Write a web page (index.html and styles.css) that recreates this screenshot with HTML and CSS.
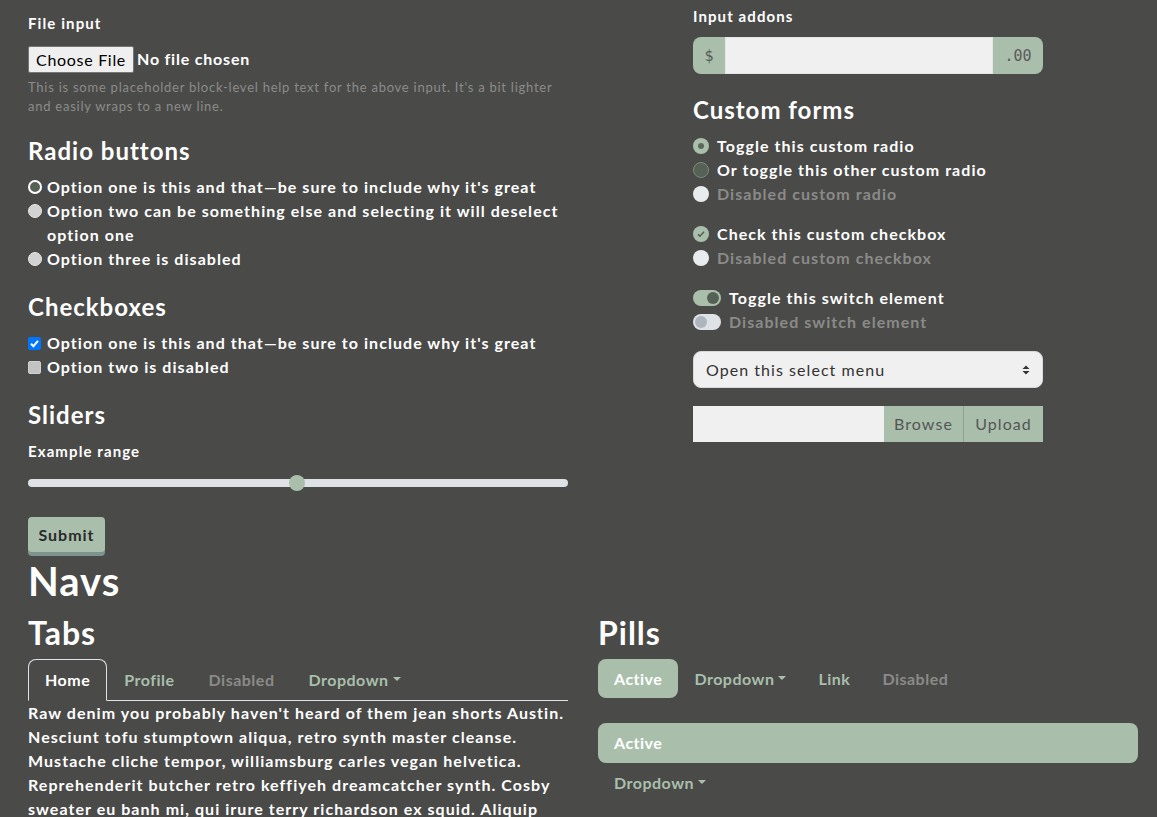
FILE: index.html
```html
<!DOCTYPE html>
<html>
<head>
<meta charset="utf-8">
<link rel="stylesheet" href="styles.css">
</head>
<body>
<div class="container">
  <div class="forms-row">
    <div class="col-left">
      <div class="group file-group">
        <div class="label">File input</div>
        <div class="file-row"><span class="file-btn">Choose File</span><span class="file-text">No file chosen</span></div>
        <div class="help">This is some placeholder block-level help text for the above input. It's a bit lighter and easily wraps to a new line.</div>
      </div>
      <h3 class="legend left">Radio buttons</h3>
      <div class="opt"><span class="radio radio-on"></span><span>Option one is this and that—be sure to include why it's great</span></div>
      <div class="opt"><span class="radio radio-off"></span><span>Option two can be something else and selecting it will deselect option one</span></div>
      <div class="opt"><span class="radio radio-off"></span><span>Option three is disabled</span></div>
      <h3 class="legend">Checkboxes</h3>
      <div class="opt"><span class="check check-on"><svg viewBox="0 0 13 13" width="13" height="13"><path d="M3 6.8 L5.4 9.2 L10 3.8" fill="none" stroke="#fff" stroke-width="2"/></svg></span><span>Option one is this and that—be sure to include why it's great</span></div>
      <div class="opt"><span class="check check-off"></span><span>Option two is disabled</span></div>
      <h3 class="legend">Sliders</h3>
      <div class="label">Example range</div>
      <div class="range"><div class="track"></div><div class="thumb"></div></div>
      <button class="submit">Submit</button>
    </div>
    <div class="col-right">
      <div class="label">Input addons</div>
      <div class="input-group"><span class="addon addon-l">$</span><span class="ig-input"></span><span class="addon addon-r">.00</span></div>
      <h3 class="legend">Custom forms</h3>
      <div class="copt"><span class="cradio cradio-on"></span><span>Toggle this custom radio</span></div>
      <div class="copt"><span class="cradio cradio-off"></span><span>Or toggle this other custom radio</span></div>
      <div class="copt disabled"><span class="cradio cradio-dis"></span><span>Disabled custom radio</span></div>
      <div class="cgap"></div>
      <div class="copt"><span class="cradio cradio-on ccheck"><svg viewBox="0 0 16 16" width="16" height="16"><path d="M5 8.3 L7 10.2 L11 5.8" fill="none" stroke="#566155" stroke-width="1.6"/></svg></span><span>Check this custom checkbox</span></div>
      <div class="copt disabled"><span class="cradio cradio-dis"></span><span>Disabled custom checkbox</span></div>
      <div class="cgap"></div>
      <div class="copt"><span class="switch switch-on"><span class="knob"></span></span><span>Toggle this switch element</span></div>
      <div class="copt disabled"><span class="switch switch-dis"><span class="knob"></span></span><span>Disabled switch element</span></div>
      <div class="select"><span>Open this select menu</span><svg class="sel-arrow" viewBox="0 0 8 12" width="8" height="12"><path d="M4 1.5 L7.5 5 H0.5 Z M4 10.5 L0.5 7 H7.5 Z" fill="#333"/></svg></div>
      <div class="cfile"><span class="cfile-input"></span><span class="cfile-btn">Browse</span><span class="cfile-btn">Upload</span></div>
    </div>
  </div>
  <h1 class="navs">Navs</h1>
  <div class="nav-row">
    <div class="nav-col">
      <h2 class="h2">Tabs</h2>
      <div class="tabs">
        <span class="tab active">Home</span>
        <span class="tab">Profile</span>
        <span class="tab dis">Disabled</span>
        <span class="tab">Dropdown<span class="caret"></span></span>
      </div>
      <p class="para">Raw denim you probably haven't heard of them jean shorts Austin. Nesciunt tofu stumptown aliqua, retro synth master cleanse. Mustache cliche tempor, williamsburg carles vegan helvetica. Reprehenderit butcher retro keffiyeh dreamcatcher synth. Cosby sweater eu banh mi, qui irure terry richardson ex squid. Aliquip placeat salvia cillum iphone.</p>
    </div>
    <div class="nav-col">
      <h2 class="h2">Pills</h2>
      <div class="pills">
        <span class="pill active">Active</span>
        <span class="pill">Dropdown<span class="caret"></span></span>
        <span class="pill">Link</span>
        <span class="pill dis">Disabled</span>
      </div>
      <div class="vpills">
        <span class="vpill active">Active</span>
        <span class="vpill">Dropdown<span class="caret"></span></span>
      </div>
    </div>
  </div>
</div>
</body>
</html>
```
FILE: styles.css
```css
* { box-sizing: border-box; }
html, body { margin: 0; padding: 0; }
body {
  background: #4a4a48;
  color: #fff;
  font-family: Lato, "Liberation Sans", sans-serif;
  font-weight: 700;
  font-size: 16px;
  letter-spacing: 1.05px;
  line-height: 24px;
  overflow: hidden;
  height: 817px;
}
.container { padding: 0 19px 0 28px; }
.forms-row { display: flex; gap: 125px; }
.col-left { width: 540px; padding-top: 11px; }
.col-right { width: 350px; padding-top: 4px; }
.label { font-size: 15px; line-height: 24px; letter-spacing: 1.1px; }
.file-row { display: flex; align-items: center; margin-top: 11px; height: 26px; }
.file-btn {
  background: #efefef; color: #000; border: 1px solid #767676; border-radius: 2px;
  height: 27px; line-height: 25px; padding: 0 7px; font-weight: 400; font-size: 16px; letter-spacing: 0.7px;
}
.file-text { margin-left: 3px; letter-spacing: 0.8px; }
.help { color: #8c8c8a; font-size: 13px; line-height: 19px; font-weight: 400; letter-spacing: 0.75px; margin-top: 6px; }
.legend { font-size: 24px; line-height: 28px; font-weight: 700; letter-spacing: 1px; margin: 22px 0 10px; }
.legend.left { margin-top: 21px; }
.opt { display: flex; align-items: flex-start; }
.opt > span:last-child { flex: 1; }
.radio { width: 14px; height: 14px; border-radius: 50%; margin: 5px 5px 0 0; flex: none; }
.radio-on { border: 2px solid #fff; background: #566155; }
.radio-off { background: #d2d2d0; border: 1px solid #e8e8e8; }
.check { width: 13px; height: 13px; border-radius: 2px; margin: 6px 6px 0 0; flex: none; display: block; }
.check svg { display: block; }
.check-on { background: #0075ff; }
.check-off { background: #c3c3c3; border: 1px solid #d0d0d0; }
.range { position: relative; height: 16px; margin-top: 12px; }
.track { position: absolute; left: 0; right: 0; top: 4px; height: 8px; border-radius: 4px; background: #dee2e6; }
.thumb { position: absolute; left: 261px; top: 0; width: 16px; height: 16px; border-radius: 50%; background: #a9bfac; }
.submit {
  margin-top: 26px; font: inherit; font-weight: 700; letter-spacing: 1px; color: #2a2a2a;
  background: #a9bfac; border: none; border-radius: 4px;
  box-shadow: 0 4px 0 #7c948d; width: 77px; height: 35px; padding: 0; display: block;
}
.input-group { display: flex; height: 37px; margin-top: 9px; border-radius: 8px; overflow: hidden; }
.addon { background: #a9bfac; color: #5a5a5a; font-family: "DejaVu Sans Mono", monospace; font-weight: 400; letter-spacing: 0; display: flex; align-items: center; justify-content: center; font-size: 15px; }
.addon-l { width: 32px; }
.addon-r { width: 50px; }
.ig-input { flex: 1; background: #f0f0f0; border: 1px solid #e6e6e6; }
.copt { display: flex; align-items: center; height: 24px; }
.copt.disabled { color: #8a8a88; }
.cradio { width: 16px; height: 16px; border-radius: 50%; margin-right: 8px; flex: none; position: relative; }
.cradio svg { position: absolute; left: 0; top: 0; }
.cradio-on { background: #a9bfac; }
.cradio-on:not(.ccheck)::after { content: ""; position: absolute; left: 5px; top: 5px; width: 6px; height: 6px; border-radius: 50%; background: #5d685d; }
.cradio-off { background: #566155; border: 1px solid #7f8b7e; }
.cradio-dis { background: #e9ecef; }
.cgap { height: 16px; }
.switch { width: 28px; height: 16px; border-radius: 8px; margin-right: 8px; flex: none; position: relative; }
.switch .knob { position: absolute; top: 2px; width: 12px; height: 12px; border-radius: 50%; }
.switch-on { background: #a9bfac; }
.switch-on .knob { right: 2px; background: #566155; }
.switch-dis { background: #dee2e6; }
.switch-dis .knob { left: 2px; background: #adb5bd; }
.select {
  margin-top: 17px; height: 37px; background: #f0f0f0; border: 1px solid #d8d8d8; border-radius: 8px;
  color: #333; font-weight: 400; display: flex; align-items: center; justify-content: space-between; padding: 0 12px;
}
.cfile { display: flex; height: 36px; margin-top: 18px; }
.cfile-input { width: 191px; background: #f0f0f0; }
.cfile-btn { background: #a9bfac; color: #555; font-weight: 400; display: flex; align-items: center; justify-content: center; flex: 1; }
.cfile-btn + .cfile-btn { border-left: 1px solid #8ea592; }
.navs { font-size: 40px; line-height: 48px; font-weight: 700; letter-spacing: 1px; margin: 5px 0 9px; }
.nav-row { display: flex; gap: 30px; }
.nav-col { width: 540px; }
.h2 { font-size: 32px; line-height: 38px; font-weight: 700; letter-spacing: 1px; margin: 0 0 7px; }
.tabs { display: flex; border-bottom: 1px solid #dee2e6; height: 42px; letter-spacing: 0.5px; }
.tab { padding: 0 17px; color: #a9bfac; display: flex; align-items: center; }
.tab.active { color: #fff; border: 1px solid #dee2e6; border-bottom: 1px solid #4a4a48; border-radius: 8px 8px 0 0; height: 42px; padding: 0 16px; }
.tab.dis, .pill.dis { color: #8a8a88; }
.caret { display: inline-block; margin-left: 4px; border-top: 4px solid currentColor; border-left: 4px solid transparent; border-right: 4px solid transparent; vertical-align: middle; position: relative; top: -1px; }
.para { margin: 0; line-height: 24px; }
.pills { display: flex; height: 39px; letter-spacing: 0.5px; }
.pill { color: #a9bfac; padding: 0 16px; display: flex; align-items: center; border-radius: 8px; }
.pill.active { background: #a9bfac; color: #fff; }
.vpills { margin-top: 25px; display: flex; flex-direction: column; letter-spacing: 0.5px; }
.vpill { color: #a9bfac; padding: 0 16px; height: 40px; display: flex; align-items: center; border-radius: 8px; }
.vpill.active { background: #a9bfac; color: #fff; }
```
